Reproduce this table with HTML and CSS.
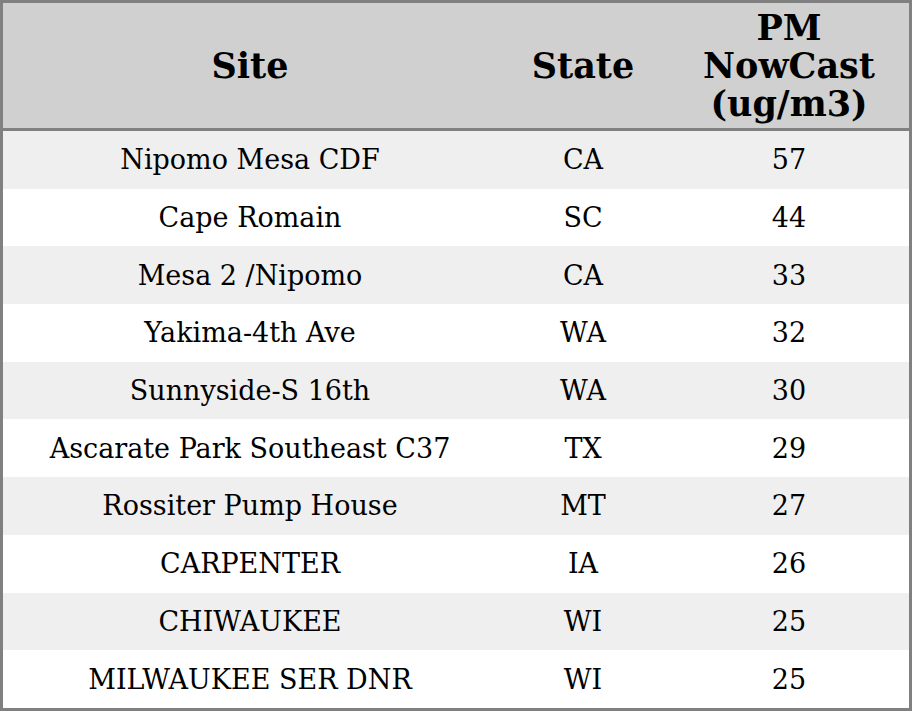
FILE: index.html
```html
<!DOCTYPE html>
<html>
<head>
<meta charset="utf-8">
<link rel="stylesheet" href="styles.css">
</head>
<body>
<div class="frame">
<table class="aq">
<colgroup>
<col class="c-site">
<col class="c-state">
<col class="c-pm">
</colgroup>
<thead>
<tr><th>Site</th><th>State</th><th>PM<br>NowCast<br>(ug/m3)</th></tr>
</thead>
<tbody>
<tr><td>Nipomo Mesa CDF</td><td>CA</td><td>57</td></tr>
<tr><td>Cape Romain</td><td>SC</td><td>44</td></tr>
<tr><td>Mesa 2 /Nipomo</td><td>CA</td><td>33</td></tr>
<tr><td>Yakima-4th Ave</td><td>WA</td><td>32</td></tr>
<tr><td>Sunnyside-S 16th</td><td>WA</td><td>30</td></tr>
<tr><td>Ascarate Park Southeast C37</td><td>TX</td><td>29</td></tr>
<tr><td>Rossiter Pump House</td><td>MT</td><td>27</td></tr>
<tr><td>CARPENTER</td><td>IA</td><td>26</td></tr>
<tr><td>CHIWAUKEE</td><td>WI</td><td>25</td></tr>
<tr><td>MILWAUKEE SER DNR</td><td>WI</td><td>25</td></tr>
</tbody>
</table>
</div>
</body>
</html>
```
FILE: styles.css
```css
html, body {
  margin: 0;
  padding: 0;
  background: #ffffff;
}
.frame {
  width: 906px;
  height: 705px;
  border: 3px solid #808080;
  overflow: hidden;
}
.aq {
  width: 906px;
  border-collapse: collapse;
  table-layout: fixed;
  font-family: "DejaVu Serif", serif;
  color: #000;
}
.c-site { width: 494px; }
.c-state { width: 172px; }
.c-pm { width: 240px; }
.aq th {
  background: #d0d0d0;
  font-weight: bold;
  font-size: 35px;
  line-height: 38px;
  height: 125px;
  padding: 0;
  text-align: center;
  vertical-align: middle;
  border-bottom: 3px solid #808080;
}
.aq td {
  font-size: 27px;
  height: 57.7px;
  padding: 0;
  text-align: center;
  vertical-align: middle;
}
.aq tbody tr:nth-child(odd) td {
  background: #efefef;
}
```
